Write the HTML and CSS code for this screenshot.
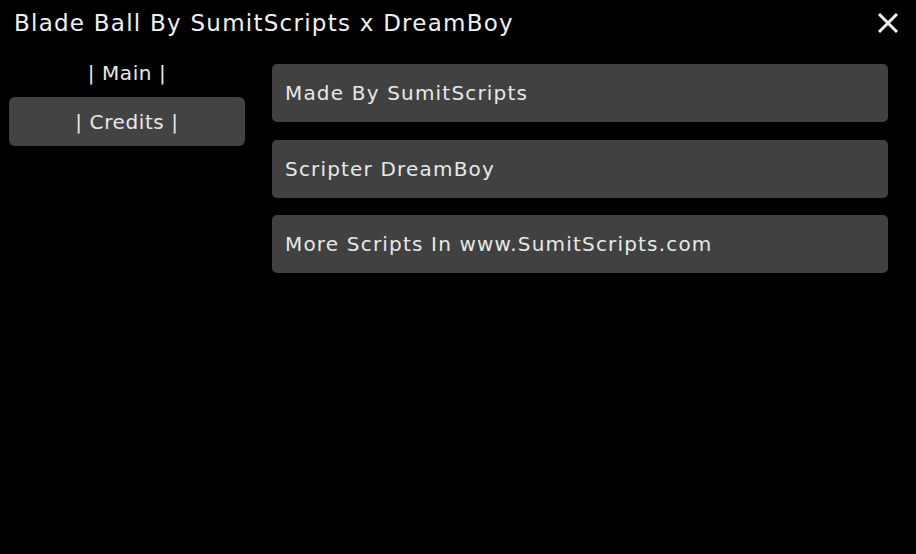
FILE: index.html
```html
<!DOCTYPE html>
<html>
<head>
<meta charset="utf-8">
<link rel="stylesheet" href="styles.css">
</head>
<body>
<div class="window">
  <header class="titlebar">
    <h1 class="title">Blade Ball By SumitScripts x DreamBoy</h1>
    <button class="close" aria-label="Close">
      <svg width="22" height="22" viewBox="0 0 22 22"><path d="M2 2 L20 20 M20 2 L2 20" stroke="#f2f2f2" stroke-width="3" stroke-linecap="butt"/></svg>
    </button>
  </header>
  <div class="body">
    <nav class="tabs">
      <div class="tab">| Main |</div>
      <div class="tab active">| Credits |</div>
    </nav>
    <main class="content">
      <div class="item">Made By SumitScripts</div>
      <div class="item">Scripter DreamBoy</div>
      <div class="item">More Scripts In www.SumitScripts.com</div>
    </main>
  </div>
</div>
</body>
</html>
```
FILE: styles.css
```css
html, body {
  margin: 0;
  padding: 0;
  background: #000;
}
body {
  width: 916px;
  height: 554px;
  overflow: hidden;
  font-family: "DejaVu Sans", "Noto Sans", sans-serif;
  color: #e8e8e8;
}
.window {
  display: flex;
  flex-direction: column;
  height: 100%;
}
.titlebar {
  display: flex;
  align-items: center;
  justify-content: space-between;
  height: 46px;
  padding: 0 17px 0 14px;
}
.title {
  margin: 0;
  font-size: 23px;
  font-weight: 400;
  letter-spacing: 1.25px;
  color: #f0f0f0;
}
.close {
  background: none;
  border: 0;
  padding: 0;
  width: 22px;
  height: 22px;
  display: flex;
}
.body {
  display: flex;
  padding: 2px 28px 0 9px;
}
.tabs {
  width: 236px;
  display: flex;
  flex-direction: column;
}
.tab {
  height: 49px;
  display: flex;
  align-items: center;
  justify-content: center;
  font-size: 20px;
  letter-spacing: 0.6px;
  border-radius: 6px;
}
.tab.active {
  background: #434343;
}
.content {
  flex: 1;
  margin-left: 27px;
  margin-top: 16px;
  display: flex;
  flex-direction: column;
  gap: 17.5px;
}
.item {
  height: 58px;
  background: #414141;
  border-radius: 5px;
  display: flex;
  align-items: center;
  padding-left: 13px;
  font-size: 20px;
  letter-spacing: 1.18px;
}
```
